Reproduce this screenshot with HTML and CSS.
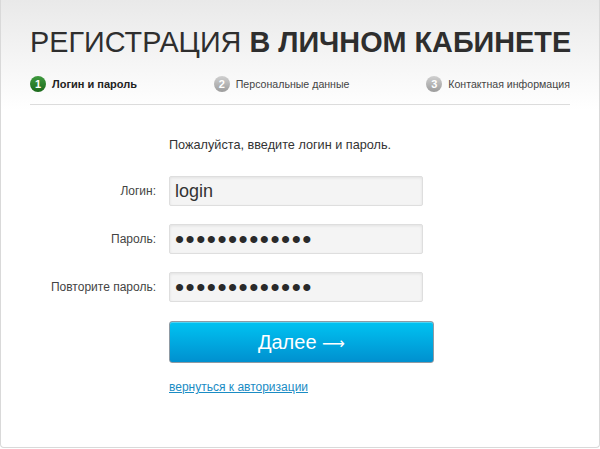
FILE: index.html
```html
<!DOCTYPE html>
<html lang="ru">
<head>
    <meta charset="UTF-8">
    <meta name="viewport" content="width=device-width, initial-scale=1.0">
    <title>Регистрация в личном кабинете</title>
    <link rel="stylesheet" href="styles.css">
</head>
<body>

    <div class="panel">
        <h1>Регистрация <b>в личном кабинете</b></h1>

        <!-- Steps -->
        <div class="steps">
            <div class="step active"><span class="num">1</span>Логин и пароль</div>
            <div class="step"><span class="num">2</span>Персональные данные</div>
            <div class="step"><span class="num">3</span>Контактная информация</div>
        </div>

        <form class="reg-form" action="#" method="POST">
            <p class="intro">Пожалуйста, введите логин и пароль.</p>

            <label for="login">Логин:</label>
            <input type="text" id="login" name="login" value="login">

            <label for="password">Пароль:</label>
            <input type="password" id="password" name="password" value="1234567890123">

            <label for="password2">Повторите пароль:</label>
            <input type="password" id="password2" name="password2" value="1234567890123">

            <button type="submit">Далее <span class="arrow">&#x27F6;</span></button>

            <a class="back-link" href="#">вернуться к авторизации</a>
        </form>
    </div>

</body>
</html>
```

FILE: styles.css
```css
body {
    margin: 0;
    font-family: "Liberation Sans", Arial, sans-serif;
    color: #333;
    background-color: #fff;
}
.panel {
    box-sizing: border-box;
    width: 600px;
    height: 448px;
    padding: 25px 29px 0;
    border: 1px solid #d9d9d9;
    border-top: none;
    border-radius: 0 0 4px 4px;
    background: linear-gradient(to bottom, #e9e9e9 0, #f7f7f7 70px, #fff 110px);
}
h1 {
    margin: 0;
    font-size: 28.8px;
    line-height: 34px;
    font-weight: normal;
    text-transform: uppercase;
    color: #2e2e2e;
    white-space: nowrap;
}
h1 b {
    font-weight: bold;
}
.steps {
    display: flex;
    justify-content: space-between;
    margin-top: 17px;
    padding-bottom: 12px;
    border-bottom: 1px solid #dcdcdc;
    font-size: 10.6px;
    line-height: 16px;
    color: #444;
}
.step {
    display: flex;
    align-items: center;
    gap: 6px;
}
.step.active {
    font-size: 11px;
    font-weight: bold;
    color: #222;
}
.num {
    width: 16px;
    height: 16px;
    border-radius: 50%;
    background: linear-gradient(to bottom, #d0d0d0, #9c9c9c);
    color: #fff;
    font-weight: bold;
    font-size: 11px;
    text-align: center;
    line-height: 16px;
}
.active .num {
    background: linear-gradient(to bottom, #3f9a3f, #1c6a1c);
}
.reg-form {
    display: grid;
    grid-template-columns: 126px 254px;
    column-gap: 13px;
    row-gap: 18px;
    align-items: center;
    margin-top: 31px;
}
.intro {
    grid-column: 2;
    margin: 0 0 4px;
    font-size: 12.7px;
    line-height: 18px;
    white-space: nowrap;
}
label {
    grid-column: 1;
    text-align: right;
    font-size: 12px;
    color: #444;
    white-space: nowrap;
}
input {
    grid-column: 2;
    box-sizing: border-box;
    height: 30px;
    padding: 0 5px;
    border: 1px solid #dedede;
    border-radius: 2px;
    background-color: #f4f4f4;
    box-shadow: inset 0 1px 3px rgba(0, 0, 0, 0.08);
    font-family: "Liberation Sans", Arial, sans-serif;
    font-size: 18px;
    color: #333;
    outline: none;
}
input[type="password"] {
    font-size: 26px;
    letter-spacing: 1.5px;
    color: #2a2a2a;
}
button {
    grid-column: 2;
    box-sizing: border-box;
    width: 265px;
    height: 42px;
    margin-top: 1px;
    border: 1px solid #8f9aa3;
    border-radius: 3px;
    background: linear-gradient(to bottom, #00c3f2, #0090cf);
    box-shadow: inset 0 1px 0 rgba(255, 255, 255, 0.3);
    color: #fff;
    font-family: "Liberation Sans", Arial, sans-serif;
    font-size: 20px;
    cursor: pointer;
}
.arrow {
    font-family: "DejaVu Sans", sans-serif;
    font-size: 16px;
}
.back-link {
    grid-column: 2;
    justify-self: start;
    margin-top: -1px;
    font-size: 12px;
    color: #1a8cc4;
}
```
